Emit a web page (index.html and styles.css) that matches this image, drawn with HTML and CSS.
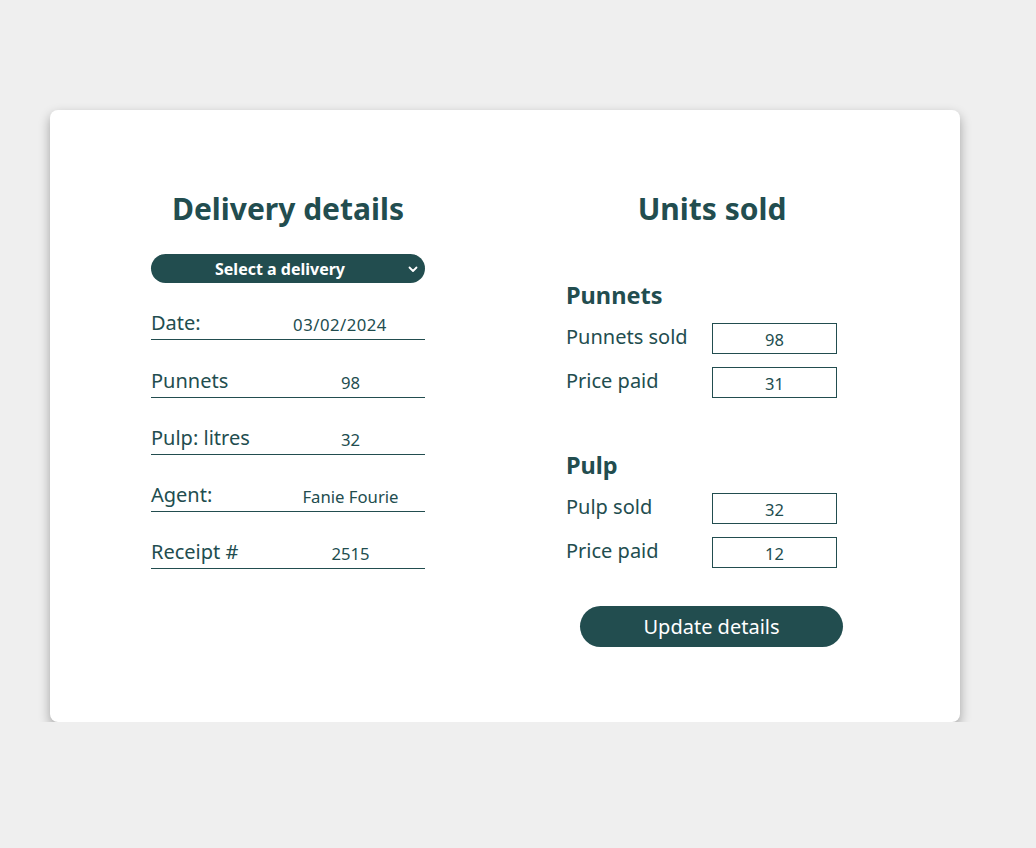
FILE: index.html
```
<!DOCTYPE html>
<html lang="en">
<head>
  <meta charset="UTF-8">
  <title>Delivery details</title>
  <link rel="stylesheet" href="styles.css">
</head>
<body>
  <div class="card">
    <!-- Left: delivery details -->
    <div class="col delivery">
      <h1>Delivery details</h1>
      <div class="select">
        <span>Select a delivery</span>
        <svg class="chev" width="10" height="7" viewBox="0 0 10 7"><path d="M1.5 1.5 L5 5 L8.5 1.5" fill="none" stroke="#fff" stroke-width="1.8" stroke-linecap="round" stroke-linejoin="round"/></svg>
      </div>
      <div class="row"><span class="label">Date:</span><span class="value date">03/02/2024</span></div>
      <div class="row"><span class="label">Punnets</span><span class="value">98</span></div>
      <div class="row"><span class="label">Pulp: litres</span><span class="value">32</span></div>
      <div class="row"><span class="label">Agent:</span><span class="value">Fanie Fourie</span></div>
      <div class="row"><span class="label">Receipt #</span><span class="value">2515</span></div>
    </div>

    <!-- Right: units sold -->
    <div class="col units">
      <h1>Units sold</h1>
      <h2>Punnets</h2>
      <div class="field"><span class="label">Punnets sold</span><div class="box">98</div></div>
      <div class="field"><span class="label">Price paid</span><div class="box">31</div></div>
      <h2 class="pulp">Pulp</h2>
      <div class="field"><span class="label">Pulp sold</span><div class="box">32</div></div>
      <div class="field"><span class="label">Price paid</span><div class="box">12</div></div>
      <button class="update">Update details</button>
    </div>
  </div>
</body>
</html>
```
FILE: styles.css
```
body {
  margin: 0;
  background: #efefef;
  font-family: "Noto Sans", "Open Sans", sans-serif;
  color: #224d4f;
}

.card {
  width: 910px;
  height: 612px;
  box-sizing: border-box;
  margin: 110px 0 0 50px;
  padding: 79px 0 0 101px;
  background: #fff;
  border-radius: 8px;
  box-shadow: 0 5px 12px rgba(0, 0, 0, 0.33);
  display: flex;
  gap: 141px;
}

h1 {
  margin: 0;
  font-size: 30px;
  line-height: 40px;
  font-weight: 700;
  text-align: center;
}

.delivery {
  width: 274px;
}

.select {
  margin-top: 25px;
  height: 29px;
  border-radius: 15px;
  background: #224d4f;
  color: #fff;
  font-size: 16px;
  font-weight: 700;
  display: flex;
  align-items: center;
  justify-content: center;
  position: relative;
}

.select span {
  margin-left: -16px;
}

.chev {
  position: absolute;
  right: 7px;
  top: 12px;
}

.row {
  height: 56.25px;
  border-bottom: 1px solid #224d4f;
  display: flex;
  align-items: flex-end;
}

.row .label {
  width: 125px;
  font-size: 20px;
  line-height: 26px;
  padding-bottom: 3px;
}

.row .value {
  flex: 1;
  text-align: center;
  font-size: 16.7px;
  line-height: 22px;
  padding-bottom: 3px;
}

.row .value.date {
  padding-right: 21px;
  letter-spacing: 0.5px;
}

.units {
  width: 292px;
}

h2 {
  margin: 51px 0 0;
  font-size: 23.5px;
  line-height: 30px;
  font-weight: 700;
}

h2.pulp {
  margin-top: 52px;
}

.field {
  display: flex;
  align-items: center;
  margin-top: 13px;
}

.field .label {
  width: 146px;
  font-size: 20px;
  line-height: 26px;
  margin-top: -3px;
}

.box {
  width: 125px;
  height: 31px;
  box-sizing: border-box;
  border: 1px solid #224d4f;
  text-align: center;
  font-size: 16.5px;
  line-height: 32px;
}

.update {
  display: block;
  margin: 38px 0 0 14px;
  width: 263px;
  height: 41px;
  border: none;
  border-radius: 21px;
  background: #224d4f;
  color: #fff;
  font-family: "Noto Sans", "Open Sans", sans-serif;
  font-size: 20px;
  cursor: pointer;
}
```
